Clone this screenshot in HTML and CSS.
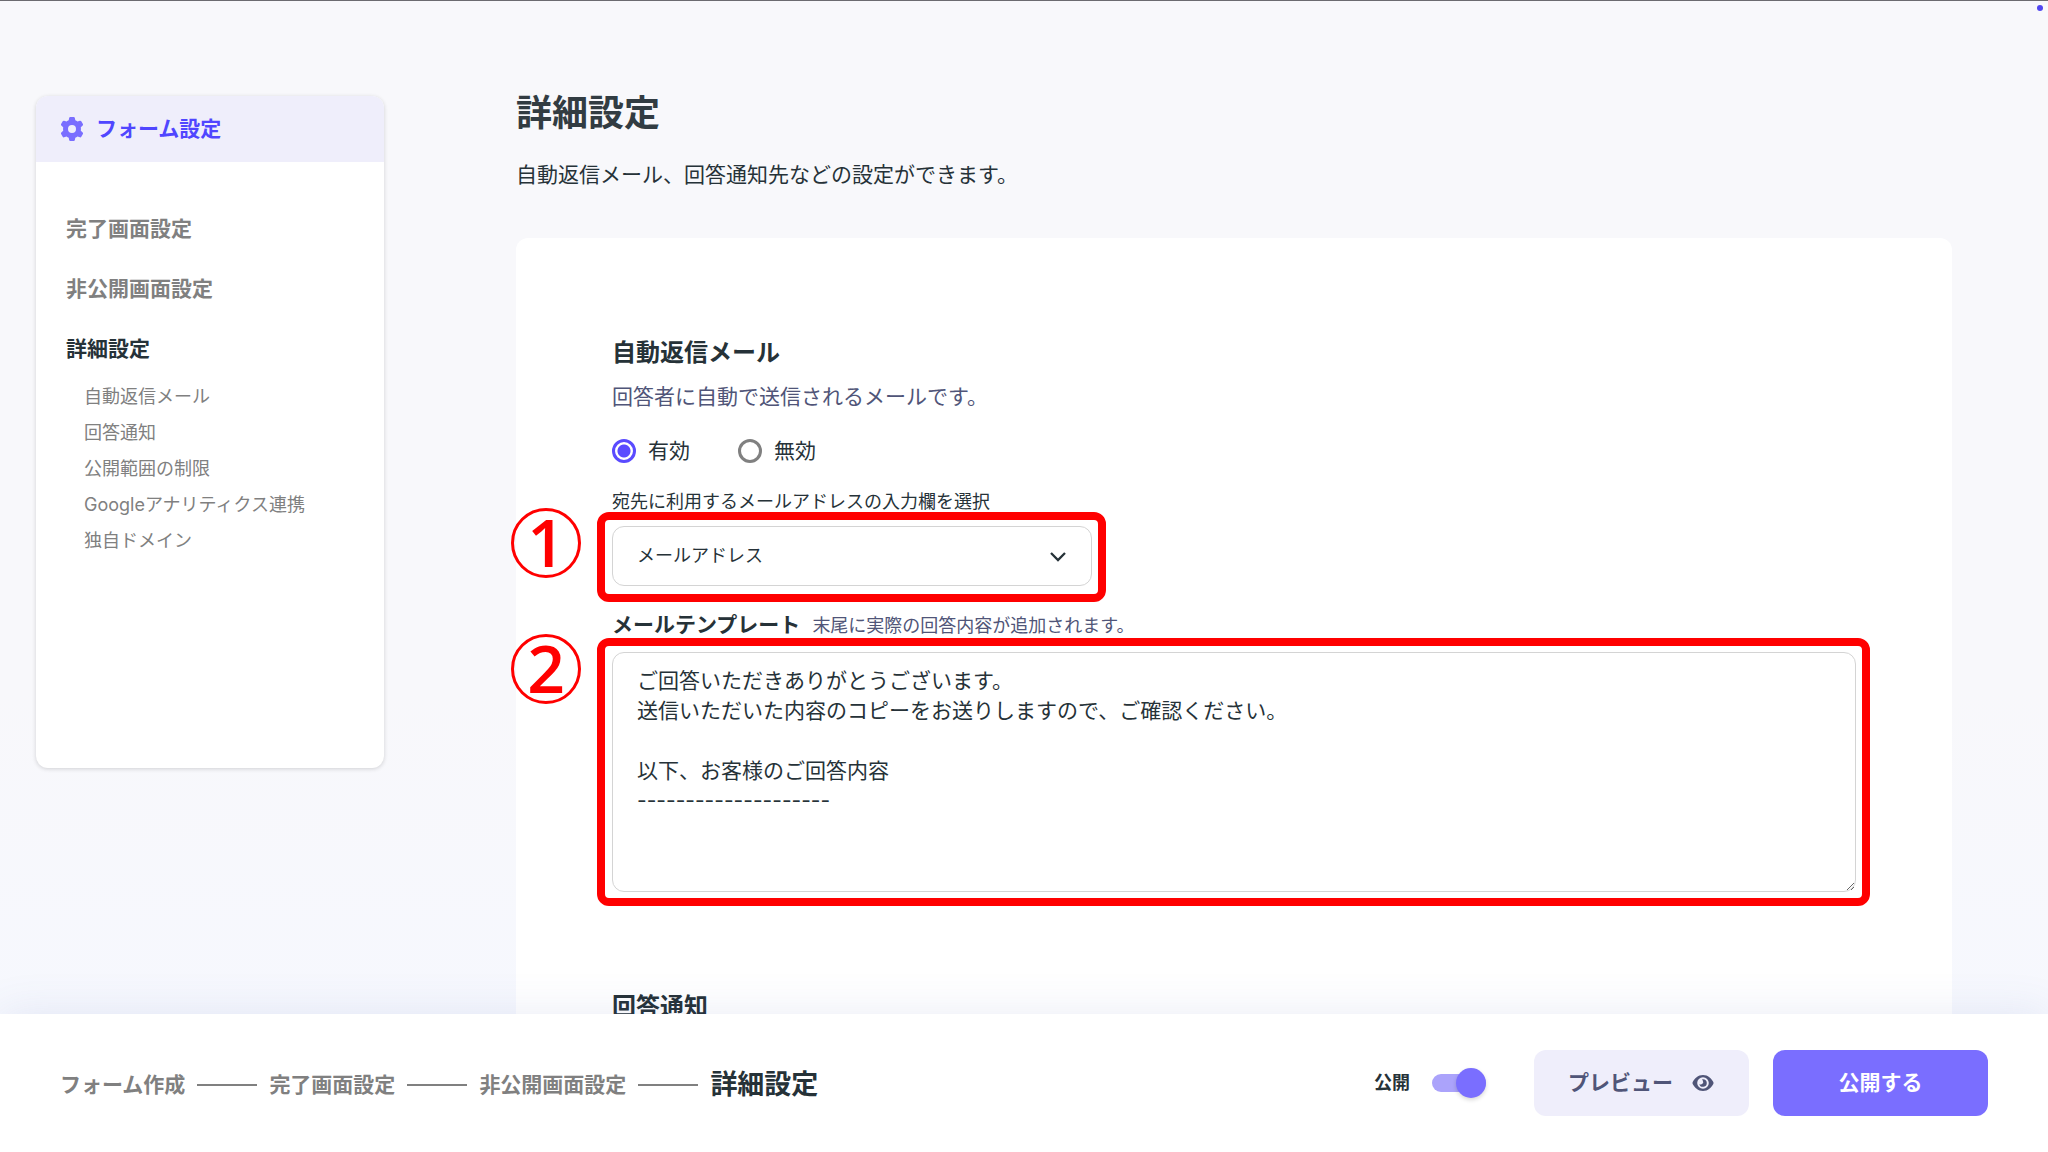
FILE: index.html
```html
<!DOCTYPE html>
<html lang="ja">
<head>
  <meta charset="UTF-8" />
  <meta name="viewport" content="width=device-width, initial-scale=1.0" />
  <title>詳細設定</title>
  <link rel="stylesheet" href="styles.css">
</head>
<body>
  <span class="status-dot"></span>

  <!-- ============================
       Page Content
       ============================ -->
  <div class="page">
    <aside class="sidebar">
      <div class="sidebar-head">
        <svg class="icon-gear" viewBox="0 0 24 24" aria-hidden="true">
          <path fill-rule="evenodd" d="M9.200 0.800Q9.400 0 10.400 0h3.200q1 0 1.200.8l.5 2.500a9 9 0 0 1 2.100 1.200l2.500-.8q.9-.3 1.400.6l1.600 2.800q.5.900-.2 1.500l-1.900 1.700a9 9 0 0 1 0 3.400l1.900 1.700q.7.600.2 1.500l-1.600 2.800q-.5.900-1.400.6l-2.500-.8a9 9 0 0 1-2.100 1.200l-.5 2.500Q14.600 24 13.600 24h-3.200q-1 0-1.200-.8l-.5-2.500a9 9 0 0 1-2.100-1.200l-2.500.8q-.9.300-1.400-.6L1.100 16.900q-.5-.9.2-1.500l1.900-1.700a9 9 0 0 1 0-3.400L1.300 8.600Q.6 8 1.100 7.100l1.600-2.800q.5-.9 1.400-.6l2.500.8a9 9 0 0 1 2.100-1.200zM12 8a4 4 0 1 0 0 8 4 4 0 0 0 0-8z"/>
        </svg>
        <span>フォーム設定</span>
      </div>
      <nav class="sidebar-nav">
        <a href="#complete">完了画面設定</a>
        <a href="#closed">非公開画面設定</a>
        <a href="#detail" class="active">詳細設定</a>
        <div class="sub-nav">
          <a href="#auto-reply">自動返信メール</a>
          <a href="#notice">回答通知</a>
          <a href="#limit">公開範囲の制限</a>
          <a href="#analytics">Googleアナリティクス連携</a>
          <a href="#domain">独自ドメイン</a>
        </div>
      </nav>
    </aside>

    <main class="content">
      <h1>詳細設定</h1>
      <p class="lead">自動返信メール、回答通知先などの設定ができます。</p>

      <div class="card">
        <section id="auto-reply">
          <h2>自動返信メール</h2>
          <p class="description">回答者に自動で送信されるメールです。</p>
          <div class="radio-row">
            <label><input type="radio" name="reply" checked />有効</label>
            <label><input type="radio" name="reply" />無効</label>
          </div>

          <label class="field-label" for="mailField">宛先に利用するメールアドレスの入力欄を選択</label>
          <div class="select-box marked">
            <span class="marker">1</span>
            <select id="mailField">
              <option>メールアドレス</option>
            </select>
            <svg class="icon-chevron" viewBox="0 0 18 12" aria-hidden="true"><path d="M2 2l7 7 7-7"/></svg>
          </div>

          <div class="template-head">
            <label for="mailTemplate">メールテンプレート</label>
            <span>末尾に実際の回答内容が追加されます。</span>
          </div>
          <div class="template-box marked">
            <span class="marker">2</span>
            <textarea id="mailTemplate">ご回答いただきありがとうございます。
送信いただいた内容のコピーをお送りしますので、ご確認ください。

以下、お客様のご回答内容
--------------------</textarea>
          </div>
        </section>

        <section id="notice">
          <h2>回答通知</h2>
        </section>
      </div>
    </main>
  </div>

  <!-- ============================
       Bottom Bar
       ============================ -->
  <footer class="bottom-bar">
    <nav class="steps">
      <a href="#create">フォーム作成</a>
      <span class="step-line"></span>
      <a href="#complete">完了画面設定</a>
      <span class="step-line"></span>
      <a href="#closed">非公開画面設定</a>
      <span class="step-line"></span>
      <a href="#detail" class="current">詳細設定</a>
    </nav>
    <div class="actions">
      <label class="toggle">公開<input type="checkbox" role="switch" checked /></label>
      <button type="button" class="btn btn-preview">
        プレビュー
        <svg class="icon-eye" viewBox="0 0 24 24" aria-hidden="true">
          <path fill-rule="evenodd" d="M12 4C7 4 3.500 7.500 1.700 11q-.5 1 0 2C3.500 16.500 7 20 12 20s8.500-3.500 10.300-7q.5-1 0-2C20.500 7.500 17 4 12 4zm0 2.200a5.800 5.800 0 1 1 0 11.600 5.800 5.800 0 0 1 0-11.600z"/>
          <path d="M12 8.200a3.800 3.800 0 1 1-3.700 4.700 2.400 2.400 0 0 0 3.500-3.200A2.400 2.400 0 0 0 11 8.300a3.800 3.800 0 0 1 1-.1z"/>
        </svg>
      </button>
      <button type="button" class="btn btn-publish">公開する</button>
    </div>
  </footer>
</body>
</html>
```
FILE: styles.css
```css
/* ============================
   Basic Reset
   ============================ */
* {
  margin: 0;
  padding: 0;
  box-sizing: border-box;
}

body {
  display: flex;
  flex-direction: column;
  height: 100vh;
  overflow: hidden;
  border-top: 1px solid #6c6b70;
  background: linear-gradient(#f8f8fb 60%, #f6f8fe 90%);
  color: #263238;
  font-family: Inter, "Noto Sans CJK JP", sans-serif;
  font-size: 21px;
  line-height: 30px;
}

a {
  color: inherit;
  text-decoration: none;
}

input,
select,
textarea,
button {
  font: inherit;
  color: inherit;
}

.status-dot {
  position: absolute;
  top: 5px;
  right: 5px;
  width: 6px;
  height: 6px;
  border-radius: 50%;
  background: #5046f0;
}

/* ============================
   Page Layout
   ============================ */
.page {
  flex: 1;
  min-height: 0;
  overflow: hidden;
  display: flex;
  align-items: flex-start;
  gap: 132px;
  padding: 0 96px 0 36px;
}

/* ============================
   Sidebar
   ============================ */
.sidebar {
  flex: 0 0 348px;
  min-height: 672px;
  margin-top: 95px;
  border-radius: 12px;
  overflow: hidden;
  background: #fff;
  box-shadow: 0 1px 4px rgba(0, 0, 0, 0.16);
}

.sidebar-head {
  display: flex;
  align-items: center;
  gap: 12px;
  height: 66px;
  padding: 0 24px;
  background: #efeefb;
  color: #5046ff;
  font-weight: 700;
}

.icon-gear {
  width: 24px;
  height: 24px;
  fill: #7a6eff;
}

.sidebar-nav {
  display: flex;
  flex-direction: column;
  gap: 30px;
  padding: 52px 30px;
  color: #808080;
  font-weight: 700;
}

.sidebar-nav .active {
  color: #263238;
}

.sub-nav {
  display: flex;
  flex-direction: column;
  gap: 10px;
  margin-top: -10px;
  padding-left: 18px;
  font-size: 18px;
  font-weight: 400;
  line-height: 26px;
}

/* ============================
   Main Content
   ============================ */
.content {
  flex: 1;
  padding-top: 83px;
}

h1 {
  font-size: 36px;
  line-height: 58px;
  color: #323c42;
}

.lead {
  margin-top: 18px;
}

.card {
  margin-top: 48px;
  padding: 96px;
  border-radius: 12px;
  background: #fff;
}

.card section + section {
  margin-top: 96px;
}

h2 {
  font-size: 24px;
  line-height: 38px;
}

.description {
  margin-top: 10px;
  color: #505578;
}

.radio-row {
  display: flex;
  gap: 48px;
  margin-top: 24px;
}

.radio-row label {
  display: flex;
  align-items: center;
  gap: 12px;
}

.radio-row input {
  appearance: none;
  width: 24px;
  height: 24px;
  border: 3px solid #808080;
  border-radius: 50%;
  background: #fff;
}

.radio-row input:checked {
  border-color: #5a4bff;
  background: radial-gradient(circle, #5a4bff 6px, #fff 7px);
}

.field-label {
  display: block;
  margin-top: 22px;
  font-size: 18px;
  line-height: 28px;
}

/* ============================
   Select + Textarea
   ============================ */
.select-box,
.template-box {
  position: relative;
  margin-top: 10px;
}

.select-box {
  width: 480px;
}

.select-box select {
  appearance: none;
  display: block;
  width: 100%;
  height: 60px;
  padding: 0 24px;
  border: 1px solid #d4d4d4;
  border-radius: 12px;
  background: #fff;
  font-size: 18px;
}

.icon-chevron {
  position: absolute;
  top: 25px;
  right: 25px;
  width: 18px;
  height: 12px;
  fill: none;
  stroke: #263238;
  stroke-width: 2.3;
  pointer-events: none;
}

.template-head {
  display: flex;
  align-items: baseline;
  gap: 12px;
  margin-top: 23px;
  line-height: 32px;
}

.template-head label {
  font-weight: 700;
}

.template-head span {
  color: #505578;
  font-size: 18px;
}

.template-box textarea {
  display: block;
  width: 100%;
  height: 240px;
  padding: 13px 24px;
  border: 1px solid #d4d4d4;
  border-radius: 12px;
  background: #fff;
  resize: both;
}

/* Numbered red frames */
.marked::before {
  content: "";
  position: absolute;
  inset: -14px -14px -14px -15px;
  border: 8px solid #f00;
  border-radius: 12px;
  pointer-events: none;
}

.select-box.marked::before {
  bottom: -16px;
}

.marker {
  position: absolute;
  top: -18px;
  left: -101px;
  width: 70px;
  height: 70px;
  border: 3px solid #f00;
  border-radius: 50%;
  color: #f00;
  font-family: "Open Sans", sans-serif;
  font-size: 66px;
  font-weight: 600;
  line-height: 61px;
  text-align: center;
}

/* ============================
   Bottom Bar
   ============================ */
.bottom-bar {
  position: relative;
  display: flex;
  align-items: center;
  justify-content: space-between;
  padding: 36px 60px;
  background: #fff;
  box-shadow: 0 0 42px rgba(80, 100, 170, 0.12);
}

.steps {
  display: flex;
  align-items: center;
  gap: 12px;
  padding-top: 4px;
  color: #808080;
  font-weight: 700;
}

.steps .current {
  color: #263238;
  font-size: 27px;
}

.step-line {
  width: 60px;
  height: 2px;
  background: #808080;
}

.actions {
  display: flex;
  align-items: center;
  gap: 24px;
}

.toggle {
  display: flex;
  align-items: center;
  gap: 22px;
  margin-right: 24px;
  font-size: 18px;
  font-weight: 700;
}

.toggle input {
  appearance: none;
  position: relative;
  width: 54px;
  height: 18px;
  border-radius: 9px;
  background: #aba3fb;
}

.toggle input::before {
  content: "";
  position: absolute;
  top: -6px;
  right: 0;
  width: 30px;
  height: 30px;
  border-radius: 50%;
  background: #7a6eff;
  box-shadow: 0 2px 4px rgba(0, 0, 0, 0.16);
}

.btn {
  display: flex;
  align-items: center;
  justify-content: center;
  gap: 18px;
  width: 215px;
  height: 66px;
  border: none;
  border-radius: 12px;
  font-weight: 700;
  cursor: pointer;
}

.btn-preview {
  background: #efeefb;
  color: #505578;
}

.icon-eye {
  width: 24px;
  height: 24px;
  fill: #505578;
}

.btn-publish {
  background: #7a6eff;
  color: #fff;
}
```
